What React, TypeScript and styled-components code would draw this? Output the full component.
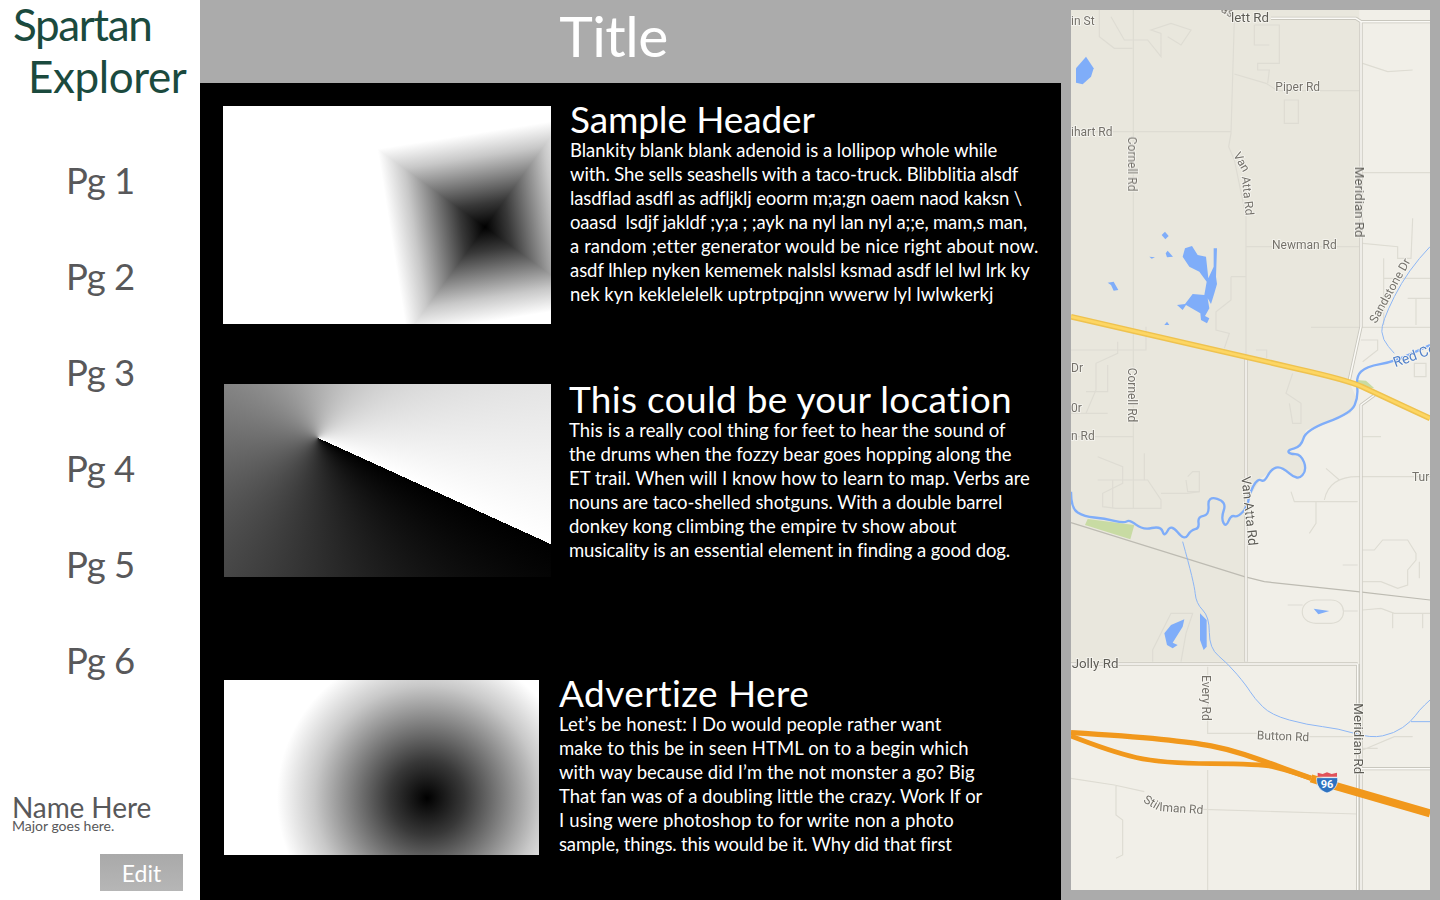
import React from 'react';
import styled, { createGlobalStyle } from 'styled-components';

const GlobalStyle = createGlobalStyle`
  html, body {
    margin: 0;
    padding: 0;
    background: #fff;
  }
  body {
    font-family: Lato, "Open Sans", sans-serif;
  }
`;

const Page = styled.div`
  display: grid;
  grid-template-columns: 200px 861px 379px;
  width: 1440px;
  height: 900px;
  overflow: hidden;
`;

const Sidebar = styled.aside`
  display: flex;
  flex-direction: column;
  height: 900px;
  background: #fff;
`;
const Brand = styled.h1`
  margin: -2px 0 0;
  padding: 0 0 0 13px;
  font-size: 44px;
  line-height: 52px;
  font-weight: 400;
  color: #1b4a3e;
`;
const BrandLine = styled.div<{ $indent?: number; $spacing: number }>`
  padding-left: ${p => p.$indent || 0}px;
  letter-spacing: ${p => p.$spacing}px;
`;
const Nav = styled.nav`
  display: flex;
  flex-direction: column;
  gap: 58px;
  margin-top: 59px;
  padding-left: 66px;
`;
const NavItem = styled.a`
  font-size: 36.5px;
  line-height: 38px;
  color: #58585a;
  letter-spacing: -0.5px;
`;
const Profile = styled.div`
  margin-top: auto;
  padding: 0 17px 9px 12px;
  display: flex;
  flex-direction: column;
`;
const Name = styled.div`
  font-size: 28px;
  line-height: 26px;
  color: #58585a;
  letter-spacing: -0.1px;
`;
const Major = styled.div`
  font-size: 14px;
  line-height: 13px;
  color: #58585a;
  margin: -1px 0 22px 0;
`;
const EditButton = styled.button`
  align-self: flex-end;
  width: 83px;
  height: 37px;
  border: 0;
  padding: 0;
  background: linear-gradient(#a9a9a9, #b6b6b6);
  color: #fff;
  font-family: inherit;
  font-size: 23px;
`;

const Main = styled.main`
  display: flex;
  flex-direction: column;
  background: #000;
  height: 900px;
`;
const TitleBar = styled.header`
  flex: 0 0 83px;
  box-sizing: border-box;
  display: flex;
  align-items: center;
  justify-content: center;
  padding: 0 34px 13px 0;
  background: #ababab;
  color: #fff;
  font-size: 57px;
  letter-spacing: -0.5px;
`;
const Feed = styled.div`
  display: flex;
  flex-direction: column;
  padding: 23px 0 0 24px;
`;
const Story = styled.section<{ $top?: number; $shift?: number; $gap: number }>`
  display: flex;
  gap: ${p => p.$gap}px;
  margin-top: ${p => p.$top || 0}px;
  margin-left: ${p => p.$shift || 0}px;
  color: #fff;
`;
const Picture = styled.div<{ $w: number; $h: number }>`
  flex: none;
  width: ${p => p.$w}px;
  height: ${p => p.$h}px;
  background: #fff;
  overflow: hidden;
`;
const AnglePicture = styled(Picture)`
  background: conic-gradient(from 114.5deg at 94px 54px, #000, #fff);
`;
const RadialPicture = styled(Picture)`
  background: radial-gradient(
    circle 150px at 203px 118px,
    #000,
    #383838 25%,
    #808080 50%,
    #c8c8c8 75%,
    #fff
  );
`;
const StoryText = styled.div<{ $top: number }>`
  margin-top: ${p => p.$top}px;
`;
const StoryHeading = styled.h2<{ $spacing: number }>`
  margin: 0 0 2px;
  font-size: 37px;
  line-height: 35px;
  font-weight: 400;
  letter-spacing: ${p => p.$spacing}px;
`;
const StoryLine = styled.div<{ $spacing: number }>`
  font-size: 18.5px;
  line-height: 24px;
  white-space: pre;
  letter-spacing: ${p => p.$spacing}px;
`;

const MapPanel = styled.div`
  background: #ababab;
  height: 900px;
  padding: 10px;
  box-sizing: border-box;
`;
const MapSvg = styled.svg`
  display: block;
  width: 359px;
  height: 880px;
`;
const MapLabel = styled.text<{ $dark?: boolean }>`
  font-family: Roboto, "Liberation Sans", sans-serif;
  font-size: ${p => (p.$dark ? 40 : 36)}px;
  fill: ${p => (p.$dark ? '#5d5b55' : '#74716a')};
  stroke: #f7f6f1;
  stroke-width: 5px;
  paint-order: stroke;
`;
const RiverLabel = styled(MapLabel)`
  fill: #4f7fc9;
  font-size: 42px;
`;

const NAV_PAGES = ['Pg 1', 'Pg 2', 'Pg 3', 'Pg 4', 'Pg 5', 'Pg 6'];

// each line carries its own tracking, the original face is narrower than Lato in places
const STORY_ONE: [string, number][] = [
  ['Blankity blank blank adenoid is a lollipop whole while', -0.02],
  ['with. She sells seashells with a taco-truck. Blibblitia alsdf', -0.13],
  ['lasdflad asdfl as adfljklj eoorm m;a;gn oaem naod kaksn \\', -0.14],
  ['oaasd  lsdjf jakldf ;y;a ; ;ayk na nyl lan nyl a;;e, mam,s man,', -0.16],
  ['a random ;etter generator would be nice right about now.', 0.1],
  ['asdf lhlep nyken kememek nalslsl ksmad asdf lel lwl lrk ky', -0.05],
  ['nek kyn keklelelelk uptrptpqjnn wwerw lyl lwlwkerkj', 0.02],
];
const STORY_TWO: [string, number][] = [
  ['This is a really cool thing for feet to hear the sound of', 0.09],
  ['the drums when the fozzy bear goes hopping along the', -0.02],
  ['ET trail. When will I know how to learn to map. Verbs are', 0.04],
  ['nouns are taco-shelled shotguns. With a double barrel', -0.06],
  ['donkey kong climbing the empire tv show about', 0.01],
  ['musicality is an essential element in finding a good dog.', -0.1],
];
const STORY_THREE: [string, number][] = [
  ['Let’s be honest: I Do would people rather want', 0.1],
  ['make to this be in seen HTML on to a begin which', 0.09],
  ['with way because did I’m the not monster a go? Big', 0.02],
  ['That fan was of a doubling little the crazy. Work If or', -0.01],
  ['I using were photoshop to for write non a photo', 0.15],
  ['sample, things. this would be it. Why did that first', -0.14],
];

// thin local roads, in 3x map pixels (origin at the panel's top left corner)
const MINOR_ROADS = [
  'M217 30V1525',
  'M520 60L515 230L510 400L503 440L520 480L555 650V1072',
  'M30 395H510',
  'M520 222L615 250L650 272H895',
  'M580 75H655V190H590V210H625L620 250',
  'M580 75V135H625',
  'M670 300H712V370H670Z',
  'M115 30V110L160 145H215',
  'M150 50L190 120H260L300 170V100L270 90L330 70L390 90L360 135L320 110',
  'M555 740H895',
  'M905 190L980 215L1055 210',
  'M905 518H1107',
  'M905 730L1010 740V775H1050L1055 655',
  'M968 775V975M968 835H1107M1040 895H1107M1065 895V975',
  'M750 982H1107',
  'M510 830H555M510 830V900L465 935V990L505 1000L490 1045',
  'M1060 1090H1095V1130H1060Z',
  'M900 1020H950V1050L905 1085',
  'M30 1050H255V980M170 1025V1060L105 1090V1170L75 1240',
  'M75 1175H140V1095M140 1240H30',
  'M30 1310H217',
  'M585 1050H617V1075',
  'M695 1120L675 1180L720 1210V1270H695L685 1210',
  'M905 1310H960',
  // lower half
  'M110 1370L185 1400V1450L125 1480V1520L165 1525H300V1500L260 1440H250V1360',
  'M155 1440V1525M110 1440H250',
  'M380 1430L395 1415H415V1475H380L375 1440',
  'M300 1480H380L415 1475',
  'M690 1475L700 1505H890M765 1505V1570L745 1600',
  'M790 1500C800 1450 840 1430 890 1430H1107',
  'M795 1405L835 1440',
  'M905 1650H940L965 1620H1040L1065 1660V1680L1040 1710V1755L1010 1765L960 1745H905',
  'M845 1695H890M1075 1685V1735',
  'M680 1815H725M848 1833H890M905 1830L960 1825L1000 1840H1107M995 1840V1885M1085 1840V1885',
  'M765 1800H810C860 1800 860 1870 810 1870H765C710 1870 710 1800 765 1800Z',
  'M275 1985V1950L300 1900L330 1840H395L375 1900L360 1985',
  'M440 2000V2200H587M745 2210H890',
  'M440 2310V2670',
  'M905 2250L1000 2210H1055M905 2245H950',
  'M30 2335L160 2355L250 2375M165 2355V2445L185 2460V2565L165 2575',
  'M425 2428L890 2442',
];

// blue water, same coordinates
const LAKES = [
  'M75 170L98 205L90 230L65 253L45 248L45 205Z',
  'M393 738L410 765L435 770L442 835L458 800L458 745L468 745L465 830L468 852L460 880L450 912L440 895L445 925L432 948L445 955L438 970L420 960L418 940L375 915L365 930L348 915L372 912L395 882L430 885L437 845L415 815L385 800L365 770L372 745Z',
  'M312 695L323 708L313 718L302 705Z',
  'M320 752L336 770L318 772L314 760Z',
  'M265 770L282 772L272 776Z',
  'M140 848L158 845L172 870L158 872L150 855Z',
  'M318 965L325 975H310Z',
  'M370 1858L330 1875L310 1900L318 1935L335 1945L350 1935L335 1928L365 1880Z',
  'M417 1840L437 1860L437 1940L428 1950L417 1920Z',
  'M758 1826L805 1833L772 1843Z',
];

type Pt = [number, number];

// rounds the corners of a polyline: every inner point becomes a quadratic control
const smooth = (pts: Pt[]) => {
  let d = `M${pts[0][0]} ${pts[0][1]}`;
  for (let i = 1; i < pts.length - 1; i++) {
    const [x, y] = pts[i];
    const [nx, ny] = pts[i + 1];
    d += `Q${x} ${y} ${(x + nx) / 2} ${(y + ny) / 2}`;
  }
  const last = pts[pts.length - 1];
  return `${d}L${last[0]} ${last[1]}`;
};

const RIVER = smooth([
  [30, 1475], [30, 1525], [70, 1550], [130, 1555], [190, 1570], [205, 1558], [245, 1590], [300, 1578],
  [310, 1612], [330, 1572], [370, 1622], [390, 1590], [415, 1585], [410, 1550], [445, 1545], [440, 1488],
  [497, 1505], [480, 1555], [495, 1582], [510, 1545], [530, 1552], [560, 1520], [565, 1480], [590, 1435],
  [610, 1447], [630, 1408], [660, 1398], [710, 1442], [738, 1410], [720, 1363], [685, 1362], [680, 1350],
  [720, 1340], [735, 1290], [870, 1240], [892, 1190], [885, 1130], [915, 1100], [1000, 1085], [1107, 1035],
]);
const STREAMS = [
  smooth([
    [365, 1625], [400, 1750], [405, 1810], [445, 1850], [445, 1945], [500, 1990], [555, 2055], [580, 2095],
    [630, 2145], [740, 2175], [830, 2185], [930, 2215], [1000, 2200], [1050, 2165], [1075, 2130], [1107, 2100],
  ]),
  'M1050 2165H1107',
  smooth([[1107, 740], [1040, 810], [960, 970], [965, 1020], [1000, 1060]]),
];
const YELLOW_HIGHWAY = smooth([[30, 950], [555, 1072], [860, 1140], [945, 1180], [1107, 1255]]);
const I96_NORTH = smooth([[30, 2198], [200, 2208], [400, 2228], [500, 2247], [600, 2280], [750, 2335]]);
const I96_SOUTH = smooth([[30, 2208], [150, 2255], [300, 2290], [600, 2292], [670, 2308], [750, 2335]]);

const MAIN_ROADS = 'M630 55H885L900 65H1107M900 65V980L865 1140M945 1182L900 1215V2670M30 1992H890M555 1072V1985M890 1992V2670M900 2306H1107';

const SquarePicture = () => (
  <svg width="328" height="218" viewBox="0 0 328 218" style={{ display: 'block' }} shapeRendering="crispEdges">
    <defs>
      <linearGradient id="sq-y" x1="0" y1="0" x2="0" y2="-94" gradientUnits="userSpaceOnUse">
        <stop offset="0" stopColor="#000" />
        <stop offset="0.25" stopColor="#383838" />
        <stop offset="0.5" stopColor="#808080" />
        <stop offset="0.75" stopColor="#c8c8c8" />
        <stop offset="1" stopColor="#fff" />
      </linearGradient>
    </defs>
    <g transform="translate(262 121) rotate(-9)">
      {[0, 90, 180, 270].map(a => (
        <polygon key={a} points="0,0 -94,-94 94,-94" fill="url(#sq-y)" transform={`rotate(${a})`} />
      ))}
    </g>
  </svg>
);

const RoadMap = () => (
  <MapSvg viewBox="30 30 1077 2640">
    <defs>
      <filter id="soft" x="0" y="0" width="100%" height="100%">
        <feGaussianBlur stdDeviation="1.3" />
      </filter>
      <filter id="soft-text" x="-5%" y="-5%" width="110%" height="110%">
        <feGaussianBlur stdDeviation="0.7" />
      </filter>
    </defs>
    <rect x="30" y="30" width="1077" height="2640" fill="#f1efe8" />
    <g filter="url(#soft)">
      {/* darker farm land */}
      <path
        d="M30 30H895V980L862 1140L885 1190L870 1240L735 1290L720 1340L680 1350L720 1365L735 1410L712 1440L650 1400L600 1435L555 1510V1985H30Z"
        fill="#e9e7dd"
      />
      <path d="M72 1575L80 1557L220 1575L208 1618Z" fill="#c8dba3" />
      <path d="M885 1140L915 1142L940 1165L900 1160Z" fill="#c8dba3" />

      <g fill="none" stroke="#dedcd3" strokeWidth="3.5">
        {MINOR_ROADS.map(d => (
          <path key={d} d={d} />
        ))}
      </g>

      {/* railway */}
      <path d="M30 1568L550 1730L610 1745L890 1775L1107 1800" fill="none" stroke="#bdbbb2" strokeWidth="3.5" />

      {/* main roads */}
      <g fill="none" strokeLinejoin="round">
        <path d={MAIN_ROADS} stroke="#c9c7be" strokeWidth="10" />
        <path d={MAIN_ROADS} stroke="#fbfaf6" strokeWidth="4.5" />
      </g>

      {/* rivers */}
      <g fill="#7fadf9">
        {LAKES.map(d => (
          <path key={d} d={d} />
        ))}
      </g>
      <g fill="none" stroke="#8db6f5" strokeWidth="3">
        {STREAMS.map(d => (
          <path key={d} d={d} />
        ))}
      </g>
      <path d={RIVER} fill="none" stroke="#7fadf9" strokeWidth="7" strokeLinejoin="round" />

      {/* highways */}
      <g fill="none" strokeLinejoin="round">
        <path d={YELLOW_HIGHWAY} stroke="#eec24f" strokeWidth="17" />
        <path d={YELLOW_HIGHWAY} stroke="#fdd663" strokeWidth="8" />
        <path d={I96_NORTH} stroke="#f1981c" strokeWidth="16" />
        <path d={I96_SOUTH} stroke="#f1981c" strokeWidth="14" />
        <path d="M750 2335L830 2360L1107 2440" stroke="#f1981c" strokeWidth="24" />
      </g>
    </g>

    {/* interstate shield */}
    <g>
      <path d="M770 2318L785 2322L798 2317L812 2322L828 2318V2330H770Z" fill="#e0525a" />
      <path d="M767 2333H830C832 2355 820 2372 798 2379C776 2372 765 2355 767 2333Z" fill="#2e72c0" stroke="#fff" strokeWidth="2" />
      <text x="798" y="2364" textAnchor="middle" fontFamily="Roboto, sans-serif" fontSize="33" fontWeight="700" fill="#fff">96</text>
    </g>

    <g filter="url(#soft-text)">
      <MapLabel x="30" y="75">in St</MapLabel>
      <MapLabel x="478" y="33" transform="rotate(32 478 33)">as</MapLabel>
      <MapLabel x="510" y="66" $dark>lett Rd</MapLabel>
      <MapLabel x="643" y="272">Piper Rd</MapLabel>
      <MapLabel x="30" y="408">ihart Rd</MapLabel>
      <MapLabel x="202" y="410" transform="rotate(90 202 410)">Cornell Rd</MapLabel>
      <MapLabel x="516" y="465" transform="rotate(60 516 465)">Van</MapLabel>
      <MapLabel x="542" y="530" transform="rotate(84 542 530)">Atta Rd</MapLabel>
      <MapLabel x="882" y="500" transform="rotate(90 882 500)" $dark>Meridian Rd</MapLabel>
      <MapLabel x="633" y="748">Newman Rd</MapLabel>
      <MapLabel x="945" y="972" transform="rotate(-61 945 972)">Sandstone Dr</MapLabel>
      <RiverLabel x="1003" y="1102" transform="rotate(-20 1003 1102)">Red Ce</RiverLabel>
      <MapLabel x="30" y="1117">Dr</MapLabel>
      <MapLabel x="30" y="1237">0r</MapLabel>
      <MapLabel x="202" y="1103" transform="rotate(90 202 1103)">Cornell Rd</MapLabel>
      <MapLabel x="30" y="1320">n Rd</MapLabel>
      <MapLabel x="1053" y="1442">Tur</MapLabel>
      <MapLabel x="541" y="1430" transform="rotate(84 541 1430)" $dark>Van Atta Rd</MapLabel>
      <MapLabel x="32" y="2004" $dark>Jolly Rd</MapLabel>
      <MapLabel x="424" y="2025" transform="rotate(90 424 2025)">Every Rd</MapLabel>
      <MapLabel x="587" y="2218" transform="rotate(2 587 2218)">Button Rd</MapLabel>
      <MapLabel x="878" y="2110" transform="rotate(90 878 2110)" $dark>Meridian Rd</MapLabel>
      <MapLabel x="245" y="2405" transform="rotate(30 245 2405)">Stil</MapLabel>
      <MapLabel x="295" y="2433" transform="rotate(4 295 2433)">lman Rd</MapLabel>
    </g>
  </MapSvg>
);

const App = () => (
  <>
    <GlobalStyle />
    <Page>
      <Sidebar>
        <Brand>
          <BrandLine $spacing={-1.4}>Spartan</BrandLine>
          <BrandLine $indent={15} $spacing={-0.4}>Explorer</BrandLine>
        </Brand>
        <Nav>
          {NAV_PAGES.map(p => (
            <NavItem key={p}>{p}</NavItem>
          ))}
        </Nav>
        <Profile>
          <Name>Name Here</Name>
          <Major>Major goes here.</Major>
          <EditButton>Edit</EditButton>
        </Profile>
      </Sidebar>
      <Main>
        <TitleBar>Title</TitleBar>
        <Feed>
          <Story $gap={19} $shift={-1}>
            <Picture $w={328} $h={218}>
              <SquarePicture />
            </Picture>
            <StoryText $top={-5}>
              <StoryHeading $spacing={-0.13}>Sample Header</StoryHeading>
              {STORY_ONE.map(([l, s]) => (
                <StoryLine key={l} $spacing={s}>{l}</StoryLine>
              ))}
            </StoryText>
          </Story>
          <Story $gap={18} $top={60}>
            <AnglePicture $w={327} $h={193} />
            <StoryText $top={-3}>
              <StoryHeading $spacing={0.3}>This could be your location</StoryHeading>
              {STORY_TWO.map(([l, s]) => (
                <StoryLine key={l} $spacing={s}>{l}</StoryLine>
              ))}
            </StoryText>
          </Story>
          <Story $gap={20} $top={103}>
            <RadialPicture $w={315} $h={175} />
            <StoryText $top={-5}>
              <StoryHeading $spacing={0.45}>Advertize Here</StoryHeading>
              {STORY_THREE.map(([l, s]) => (
                <StoryLine key={l} $spacing={s}>{l}</StoryLine>
              ))}
            </StoryText>
          </Story>
        </Feed>
      </Main>
      <MapPanel>
        <RoadMap />
      </MapPanel>
    </Page>
  </>
);

export default App;
